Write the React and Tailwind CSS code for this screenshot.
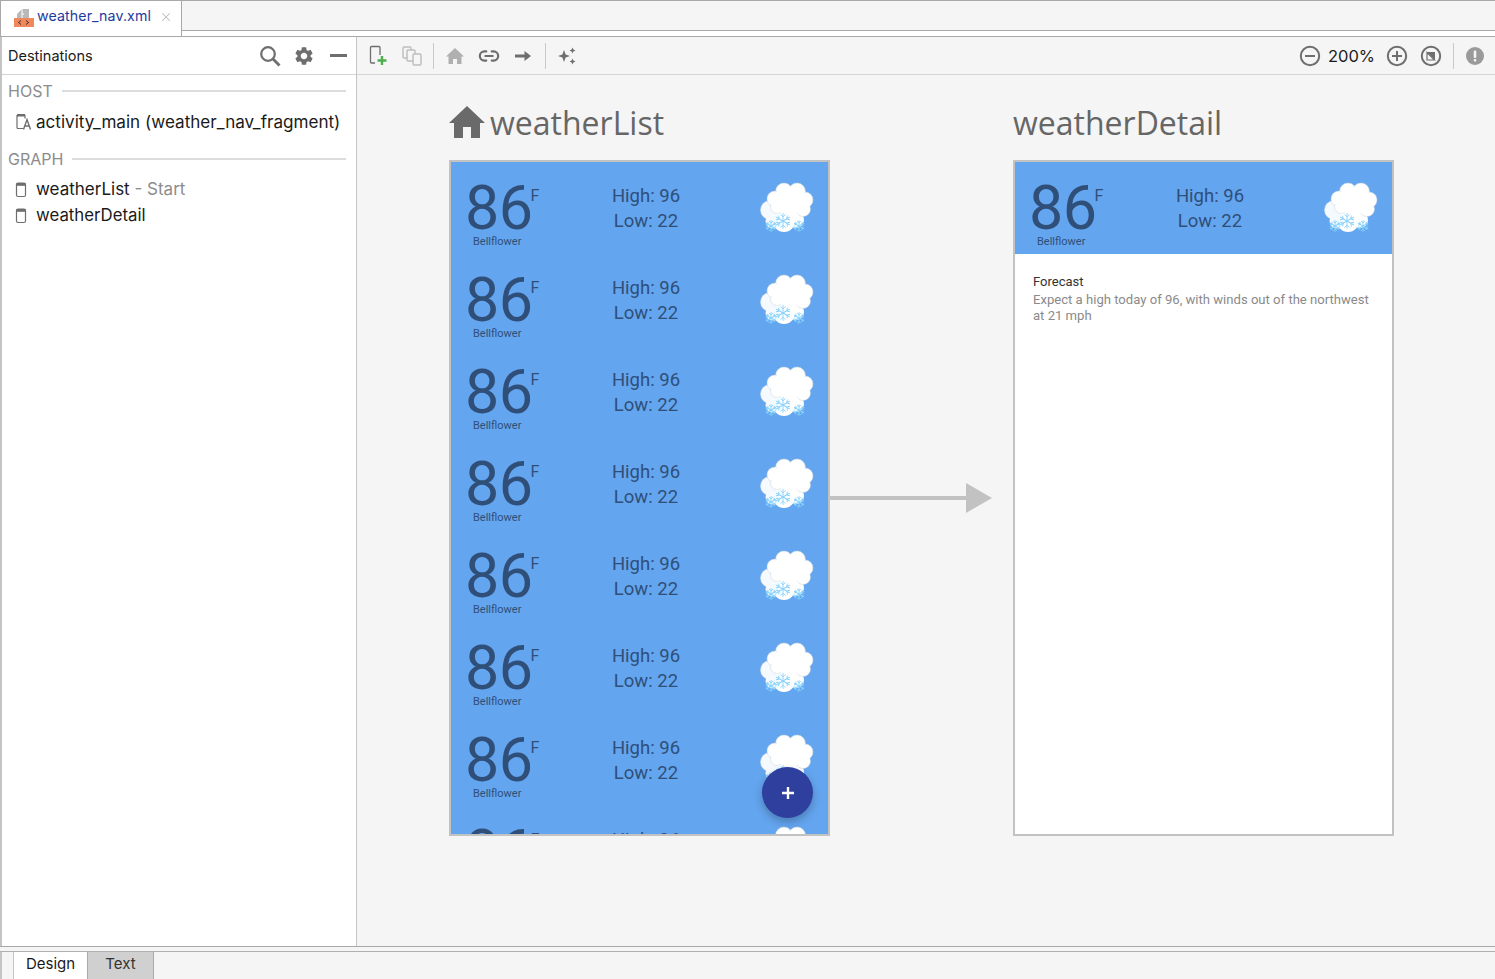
import { Link2, X } from 'lucide-react'
import { MdSettings } from 'react-icons/md'

const rows = [0, 1, 2, 3, 4, 5, 6]

function Flake({ x, y, r, w = 0.9 }) {
  const arms = [0, 60, 120]
  return (
    <g transform={`translate(${x} ${y})`} stroke="#86d2fb" strokeWidth={w} strokeLinecap="round" fill="none">
      {arms.map((a) => (
        <g key={a} transform={`rotate(${a})`}>
          <path d={`M0 ${-r}V${r}M${-r * 0.3} ${-r * 0.85}L0 ${-r * 0.55}L${r * 0.3} ${-r * 0.85}M${-r * 0.3} ${r * 0.85}L0 ${r * 0.55}L${r * 0.3} ${r * 0.85}`} />
        </g>
      ))}
    </g>
  )
}

function Cloud() {
  return (
    <svg width="56" height="54" viewBox="0 0 56 54" className="shrink-0">
      {/* back cloud */}
      <circle cx="12" cy="30" r="9.5" fill="#f4fafe" stroke="#d6dde3" strokeWidth="0.5" />
      {/* snow strip */}
      <circle cx="26" cy="41" r="11" fill="#ffffff" />
      <circle cx="15" cy="41" r="7.5" fill="#f4fafe" />
      <circle cx="38" cy="40" r="8" fill="#ffffff" />
      {/* front cloud */}
      <g fill="#ffffff" stroke="#c9d2da" strokeWidth="0.5">
        <circle cx="26" cy="11.5" r="8.5" />
        <circle cx="39" cy="11.5" r="8.5" />
        <circle cx="47" cy="20" r="8" />
        <circle cx="45" cy="29" r="7.5" />
        <circle cx="17" cy="19" r="8" />
        <circle cx="19" cy="27" r="6.5" />
      </g>
      <circle cx="32" cy="21" r="14" fill="#ffffff" />
      <circle cx="26" cy="14" r="7.5" fill="#ffffff" />
      <circle cx="39" cy="14" r="7.5" fill="#ffffff" />
      <circle cx="45" cy="22" r="7.5" fill="#ffffff" />
      <circle cx="19" cy="20" r="7" fill="#ffffff" />
      {/* flakes sit on top of both clouds */}
      <Flake x={25} y={41} r={7.5} />
      <Flake x={13} y={46} r={5.5} w={0.9} />
      <Flake x={41} y={46} r={5.5} w={0.9} />
    </svg>
  )
}

function WeatherRow() {
  return (
    <div className="h-[92px] shrink-0 flex items-start text-[#2f4f79]">
      <div className="w-[150px] pl-[14px] pt-[17px] shrink-0">
        <div className="flex items-start h-[58px]">
          <span className="text-[61px] leading-[58px] tracking-[-0.5px]">86</span>
          <span className="text-[16px] leading-none mt-[9px] ml-[-2px]">F</span>
        </div>
        <div className="text-[11px] leading-[13px] pl-[8px] mt-[-2px]">Bellflower</div>
      </div>
      <div className="w-[90px] shrink-0 text-center text-[18.5px] leading-[25px] pt-[22px]">
        <div>High: 96</div>
        <div>Low: 22</div>
      </div>
      <div className="pt-[18px] ml-[67px]">
        <Cloud />
      </div>
    </div>
  )
}

function PhoneIcon() {
  return (
    <svg width="12" height="16" viewBox="0 0 12 16" className="shrink-0" fill="none">
      <rect x="1.5" y="1" width="9" height="13.5" rx="1.5" stroke="#6e6e6e" strokeWidth="1.2" />
      <rect x="1.5" y="1" width="9" height="2.8" fill="#6e6e6e" />
    </svg>
  )
}

function ZoomCircle({ children }) {
  return (
    <svg width="22" height="22" viewBox="0 0 22 22" fill="none" stroke="#6e6e6e" strokeWidth="2">
      <circle cx="11" cy="11" r="9.2" />
      {children}
    </svg>
  )
}

function Divider() {
  return <div className="w-px h-[26px] bg-[#c9c9c9]" />
}

export default function App() {
  return (
    <div className="w-[1495px] h-[979px] overflow-hidden flex flex-col bg-white text-[#1a1a1a] font-['Inter',sans-serif]">
      {/* file tabs */}
      <div className="h-[37px] shrink-0 flex bg-white border-t border-[#a8a8a8] border-b">
        <div className="w-[182px] h-[35px] bg-white border-r border-l border-[#a8a8a8] flex items-center pl-[12px]">
          <svg width="21" height="21" viewBox="0 0 21 21" className="shrink-0 mt-[-2px]">
            <path d="M9 2h7v9H4V7z" fill="#b9b9b9" />
            <path d="M9 7h2M9 2v9" stroke="#fff" strokeWidth="1" />
            <rect x="1" y="11" width="20" height="9" fill="#f0885c" />
            <path d="M8 13.5L5.5 15.5L8 17.5M13 13.5L15.5 15.5L13 17.5" stroke="#333" strokeWidth="1" fill="none" />
          </svg>
          <span className="text-[14.2px] ml-[3px] mt-[-6px] text-[#1c3aa0] tracking-[0.1px]">weather_nav.xml</span>
          <X size={14} className="text-[#bdbdbd] ml-[8px] mt-[-4px]" strokeWidth={1.8} />
        </div>
        <div className="flex-1 h-[30px] bg-[#f5f5f5] border-b border-[#a8a8a8]" />
      </div>

      <div className="flex-1 flex min-h-0 border-b border-[#a8a8a8]">
        {/* destinations panel */}
        <div className="w-[357px] shrink-0 border-l-2 border-r border-[#c4c4c4] bg-white">
          <div className="h-[38px] flex items-center border-b border-[#d4d4d4] pl-[6px] pr-[9px]">
            <span className="text-[14.5px] flex-1">Destinations</span>
            <svg width="22" height="22" viewBox="0 0 22 22" fill="none" stroke="#6e6e6e" strokeWidth="2.2" className="mr-[12px]">
              <circle cx="9" cy="9" r="6.8" />
              <path d="M14 14l6.5 6.5" strokeWidth="2.8" />
            </svg>
            <MdSettings size={22} className="text-[#6e6e6e] mr-[15px]" />
            <div className="w-[17px] h-[2.5px] bg-[#6e6e6e]" />
          </div>
          <div className="pl-[6px] pr-[10px] pt-[6px]">
            <div className="flex items-center gap-[9px] h-[20px] text-[#8c8c8c] text-[16px]">
              HOST
              <div className="flex-1 h-[2px] bg-[#dcdcdc]" />
            </div>
            <div className="flex items-center h-[26px] mt-[8px] pl-[7px] text-[17.1px] gap-[4px] whitespace-nowrap">
              <svg width="17" height="18" viewBox="0 0 17 18" fill="none" className="shrink-0">
                <path d="M8 15.5H3a1 1 0 0 1-1-1V2.5h8v3" stroke="#6e6e6e" strokeWidth="1.2" />
                <rect x="2" y="1" width="8" height="2.5" fill="#6e6e6e" />
                <path d="M8.5 16.5L12 6.5L15.5 16.5M9.8 13h4.4" stroke="#6e6e6e" strokeWidth="1.4" />
              </svg>
              activity_main (weather_nav_fragment)
            </div>
            <div className="flex items-center gap-[9px] h-[20px] mt-[14px] text-[#8c8c8c] text-[16px]">
              GRAPH
              <div className="flex-1 h-[2px] bg-[#dcdcdc]" />
            </div>
            <div className="flex items-center h-[26px] mt-[8px] pl-[7px] text-[17px] gap-[9px]">
              <PhoneIcon />
              <span>weatherList <span className="text-[#8c8c8c]">- Start</span></span>
            </div>
            <div className="flex items-center h-[26px] mt-[0px] pl-[7px] text-[16.8px] gap-[9px]">
              <PhoneIcon />
              weatherDetail
            </div>
          </div>
        </div>

        {/* editor */}
        <div className="flex-1 min-w-0 flex flex-col bg-[#f5f5f5]">
          <div className="h-[38px] shrink-0 flex items-center border-b border-[#d4d4d4] pl-[12px] pr-[10px]">
            <svg width="20" height="22" viewBox="0 0 20 22" fill="none" className="mr-[13px]">
              <path d="M6 18H2.5a1 1 0 0 1-1-1V2.5a1 1 0 0 1 1-1H10a1 1 0 0 1 1 1V10" stroke="#6e6e6e" strokeWidth="1.3" />
              <path d="M13 11v9M8.5 15.5h9" stroke="#4caf50" strokeWidth="2.4" />
            </svg>
            <svg width="20" height="20" viewBox="0 0 20 20" fill="none" stroke="#bdbdbd" strokeWidth="1.4" className="mr-[11px]">
              <rect x="1" y="1" width="8" height="11" rx="1" />
              <rect x="5" y="4" width="8" height="11" rx="1" fill="#f5f5f5" />
              <rect x="11" y="8" width="8" height="11" rx="1" fill="#f5f5f5" />
            </svg>
            <Divider />
            <svg width="20" height="20" viewBox="0 0 20 20" fill="#b0b0b0" className="ml-[11px]">
              <path d="M10 2L1 10.5h2.5V18H8v-5h4v5h4.5v-7.5H19z" />
            </svg>
            <Link2 size={22} className="text-[#6e6e6e] ml-[13px]" strokeWidth={2.4} />
            <svg width="18" height="18" viewBox="0 0 18 18" fill="#6e6e6e" className="ml-[14px]">
              <path d="M1 7.5h9.5V4L17 9l-6.5 5v-3.5H1z" />
            </svg>
            <div className="w-px h-[26px] bg-[#c9c9c9] ml-[13px]" />
            <svg width="20" height="20" viewBox="0 0 20 20" fill="#6e6e6e" className="ml-[11px]">
              <path d="M7 4l1.6 4.4L13 10l-4.4 1.6L7 16l-1.6-4.4L1 10l4.4-1.6z" />
              <path d="M15.5 1.5l.9 2.1 2.1.9-2.1.9-.9 2.1-.9-2.1-2.1-.9 2.1-.9zM15.5 12.5l.9 2.1 2.1.9-2.1.9-.9 2.1-.9-2.1-2.1-.9 2.1-.9z" />
            </svg>
            <div className="flex-1" />
            <ZoomCircle><path d="M6 11h10" /></ZoomCircle>
            <span className="text-[16.5px] ml-[7px] mr-[11px] text-[#1a1a1a] mt-[1px]">200%</span>
            <ZoomCircle><path d="M6 11h10M11 6v10" /></ZoomCircle>
            <div className="ml-[12px]">
              <ZoomCircle>
                <path d="M7 7h8v8z" fill="#6e6e6e" stroke="none" />
                <path d="M7 7.5v7.5h7.5z" fill="none" strokeWidth="1.2" />
              </ZoomCircle>
            </div>
            <div className="w-px h-[26px] bg-[#c9c9c9] ml-[11px]" />
            <svg width="20" height="20" viewBox="0 0 20 20" className="ml-[11px]">
              <circle cx="10" cy="10" r="9" fill="#9a9a9a" />
              <rect x="8.7" y="4.5" width="2.6" height="7.5" rx="1" fill="#f5f5f5" />
              <rect x="8.7" y="13" width="2.6" height="2.6" rx="1" fill="#f5f5f5" />
            </svg>
          </div>

          {/* nav graph */}
          <div className="flex-1 min-h-0 flex pl-[92px] pt-[27px] font-['Roboto',sans-serif]">
            <div className="w-[381px] shrink-0">
              <div className="h-[58px] pt-[1px] flex items-start gap-[5px] text-[32px] leading-[40px] text-[#666666] font-['Open_Sans',sans-serif]">
                <svg width="36" height="36" viewBox="0 0 36 36" fill="#6a6a6a" className="shrink-0 mt-[1px]">
                  <path d="M18 2L0 19h5v15h9V23h8v11h9V19h5z" />
                </svg>
                weatherList
              </div>
              <div className="h-[676px] bg-[#64a5ef] border-2 border-[#c2c2c2] overflow-hidden relative flex flex-col">
                {rows.map((r) => (
                  <WeatherRow key={r} />
                ))}
                <WeatherRow />
                <div className="absolute left-[311px] top-[605px] w-[51px] h-[51px] rounded-full bg-[#2e3f9e] shadow-[0_4px_8px_rgba(0,0,0,0.25)] flex items-center justify-center text-white">
                  <svg width="14" height="14" viewBox="0 0 14 14" stroke="#fff" strokeWidth="2.4">
                    <path d="M7 1v12M1 7h12" />
                  </svg>
                </div>
              </div>
            </div>
            <div className="w-[183px] shrink-0 pt-[380px]">
              <svg width="162" height="32" viewBox="0 0 162 32">
                <path d="M0 16H138" stroke="#c2c2c2" strokeWidth="4" />
                <path d="M136 1L162 16L136 31z" fill="#c2c2c2" />
              </svg>
            </div>
            <div className="w-[381px] shrink-0">
              <div className="h-[58px] pt-[1px] text-[32px] leading-[40px] text-[#666666] font-['Open_Sans',sans-serif]">weatherDetail</div>
              <div className="h-[676px] bg-white border-2 border-[#c2c2c2] overflow-hidden">
                <div className="bg-[#64a5ef]">
                  <WeatherRow />
                </div>
                <div className="px-[18px] pt-[20px]">
                  <div className="text-[13px] leading-[16px] text-[#333333]">Forecast</div>
                  <div className="text-[13.1px] leading-[15.5px] text-[#8a8a8a] mt-[2px]">
                    Expect a high today of 96, with winds out of the northwest at 21 mph
                  </div>
                </div>
              </div>
            </div>
          </div>
        </div>
      </div>

      {/* bottom tabs */}
      <div className="h-[32px] shrink-0 pt-[4px] bg-[#f5f5f5]">
        <div className="h-[28px] flex border-t border-[#b0b0b0]">
          <div className="w-[14px] border-r border-l-2 border-[#c4c4c4]" />
          <div className="w-[73px] bg-white flex items-center justify-center text-[15px] pb-[2px]">Design</div>
          <div className="w-[67px] bg-[#d0d0d0] border-l border-r border-[#aaaaaa] flex items-center justify-center text-[15px] pb-[2px] text-[#333333]">Text</div>
        </div>
      </div>
    </div>
  )
}
